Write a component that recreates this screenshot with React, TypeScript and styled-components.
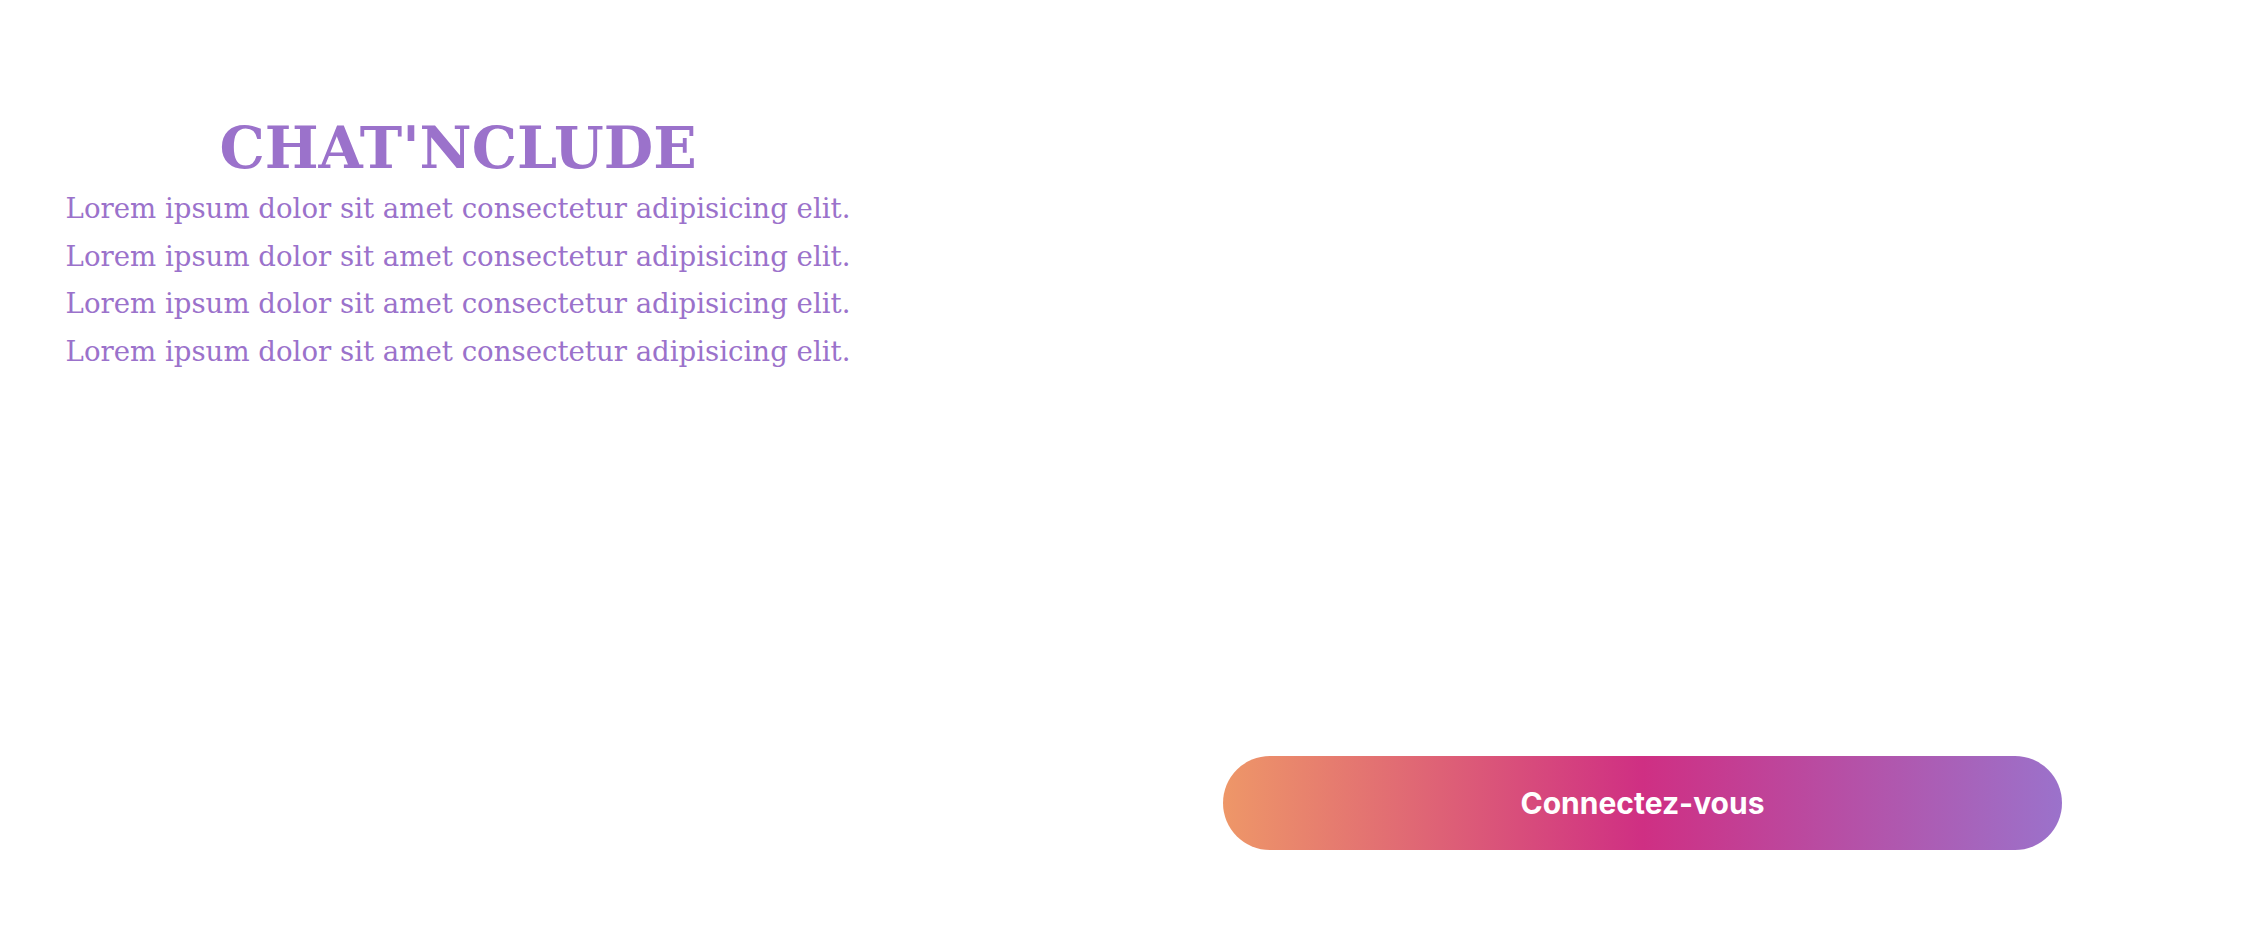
import React from "react";
import styled, { createGlobalStyle } from "styled-components";

const GlobalStyle = createGlobalStyle`
  html, body {
    margin: 0;
    padding: 0;
    background: #ffffff;
  }
  body {
    font-family: "DejaVu Serif", Georgia, serif;
  }
`;

const Page = styled.main`
  display: flex;
  width: 2262px;
  height: 932px;
  box-sizing: border-box;
`;

const Intro = styled.section`
  width: 916px;
  padding-top: 111px;
  text-align: center;
  color: #9b72cb;
  font-family: "DejaVu Serif", Georgia, serif;
`;

const Title = styled.h1`
  margin: 0;
  font-size: 57px;
  line-height: 74px;
  font-weight: 700;
  letter-spacing: 0;
`;

const Line = styled.p`
  margin: 0;
  font-size: 27.6px;
  line-height: 47.5px;
  font-weight: 400;
`;

const Actions = styled.section`
  flex: 1;
  display: flex;
  flex-direction: column;
  justify-content: flex-end;
  padding: 0 0 82px 307px;
`;

const ConnectButton = styled.button`
  width: 839px;
  height: 94px;
  border: none;
  border-radius: 47px;
  background: linear-gradient(90deg, #ee9768 0%, #cf2f83 50%, #9b72cb 100%);
  color: #ffffff;
  font-family: Inter, "Noto Sans", sans-serif;
  font-weight: 700;
  font-size: 30px;
  cursor: pointer;
`;

const lines = Array.from({ length: 4 }, () => "Lorem ipsum dolor sit amet consectetur adipisicing elit.");

export default function App() {
  return (
    <>
      <GlobalStyle />
      <Page>
        <Intro>
          <Title>CHAT'NCLUDE</Title>
          {lines.map((t, i) => (
            <Line key={i}>{t}</Line>
          ))}
        </Intro>
        <Actions>
          <ConnectButton>Connectez-vous</ConnectButton>
        </Actions>
      </Page>
    </>
  );
}
